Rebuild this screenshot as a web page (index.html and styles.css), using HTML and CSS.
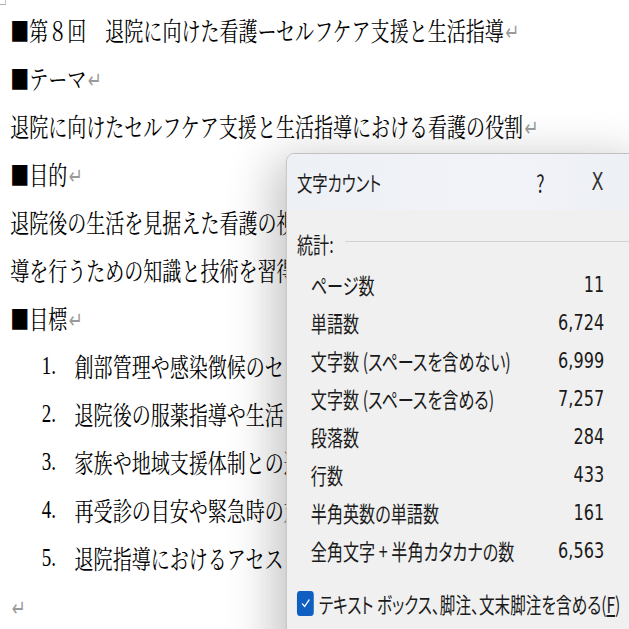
FILE: index.html
```html
<!DOCTYPE html>
<html lang="ja">
<head>
    <meta charset="utf-8">
    <title>文字カウント</title>
    <link rel="stylesheet" href="styles.css">
</head>
<body>
    <div class="screen">
        <div class="corner"></div>
        <div class="doc">
            <p><span class="sq">■</span>第８回　退院に向けた看護ーセルフケア支援と生活指導<span class="ret">↵</span></p>
            <p><span class="sq">■</span>テーマ<span class="ret">↵</span></p>
            <p>退院に向けたセルフケア支援と生活指導における看護の役割<span class="ret">↵</span></p>
            <p><span class="sq">■</span>目的<span class="ret">↵</span></p>
            <p>退院後の生活を見据えた看護の視</p>
            <p>導を行うための知識と技術を習得</p>
            <p><span class="sq">■</span>目標<span class="ret">↵</span></p>
            <ol class="goals">
                <li><span class="num">1.</span>創部管理や感染徴候のセ</li>
                <li><span class="num">2.</span>退院後の服薬指導や生活</li>
                <li><span class="num">3.</span>家族や地域支援体制との連</li>
                <li><span class="num">4.</span>再受診の目安や緊急時の対</li>
                <li><span class="num">5.</span>退院指導におけるアセス</li>
            </ol>
            <p><span class="ret">↵</span></p>
        </div>

        <div class="dialog">
            <div class="titlebar">
                <span class="title">文字カウント</span>
                <span class="help">?</span>
                <span class="close">X</span>
            </div>
            <div class="dialog-body">
                <div class="stats-head">
                    <span>統計:</span>
                    <span class="rule"></span>
                </div>
                <div class="row"><span>ページ数</span><span class="val">11</span></div>
                <div class="row"><span>単語数</span><span class="val">6,724</span></div>
                <div class="row"><span>文字数 (スペースを含めない)</span><span class="val">6,999</span></div>
                <div class="row"><span>文字数 (スペースを含める)</span><span class="val">7,257</span></div>
                <div class="row"><span>段落数</span><span class="val">284</span></div>
                <div class="row"><span>行数</span><span class="val">433</span></div>
                <div class="row"><span>半角英数の単語数</span><span class="val">161</span></div>
                <div class="row"><span>全角文字 + 半角カタカナの数</span><span class="val">6,563</span></div>
                <label class="check">
                    <span class="box">
                        <svg width="14" height="12" viewBox="0 0 14 12"><path d="M2 6.5 L5.5 9.5 L12 2.5" fill="none" stroke="#fff" stroke-width="1.6"/></svg>
                    </span>
                    <span class="check-text">テキスト ボックス、脚注、文末脚注を含める(<u>F</u>)</span>
                </label>
            </div>
        </div>
    </div>
</body>
</html>
```

FILE: styles.css
```css
* {
    margin: 0;
    padding: 0;
    box-sizing: border-box;
}
html, body {
    width: 629px;
    height: 629px;
    overflow: hidden;
    background: #fff;
}
/* the capture is squeezed horizontally, so the page is laid out wide and scaled */
.screen {
    position: relative;
    width: 860px;
    height: 629px;
    transform: scaleX(0.7314);
    transform-origin: 0 0;
    overflow: hidden;
}
.corner {
    position: absolute;
    left: 0;
    top: 0;
    width: 8px;
    height: 5px;
    border-right: 1px solid #b0b0b0;
    border-bottom: 1px solid #b0b0b0;
}
.doc {
    padding: 6px 0 0 14px;
    font-family: "Noto Serif CJK JP", "Noto Sans CJK JP", serif;
    font-size: 26px;
    line-height: 48px;
    color: #000;
    white-space: nowrap;
}
.doc p,
.goals li {
    height: 48px;
}
.sq {
    font-family: "Noto Sans CJK JP", sans-serif;
    line-height: 1;
}
.ret {
    font-family: "DejaVu Sans", sans-serif;
    font-size: 23px;
    line-height: 1;
    color: #9a9a9a;
    margin-left: 2px;
    vertical-align: 1px;
}
.goals {
    list-style: none;
    padding-left: 43px;
}
.goals li {
    display: flex;
}
.num {
    font-family: "Liberation Serif", serif;
    width: 45px;
}

.dialog {
    position: absolute;
    left: 391px;
    top: 153px;
    width: 500px;
    height: 520px;
    background: #f0f0f0;
    border: 1px solid #b9b9b9;
    border-radius: 10px;
    box-shadow: -16px 6px 55px rgba(0, 0, 0, 0.24);
    font-family: "Noto Sans CJK JP", sans-serif;
    font-feature-settings: "palt";
    font-size: 22px;
    color: #1b1b1b;
    overflow: hidden;
}
.titlebar {
    display: flex;
    align-items: center;
    height: 56px;
    padding-left: 14px;
    background: linear-gradient(90deg, #edf0f5, #f1f3f8 60%, #eceff4);
}
.title {
    flex: 0 0 auto;
    font-size: 21px;
}
.help {
    margin-left: 212px;
    font-size: 24px;
}
.close {
    margin-left: 64px;
    font-family: "DejaVu Sans", sans-serif;
    font-size: 24px;
    color: #333;
}
.dialog-body {
    padding: 16px 0 0 14px;
}
.stats-head {
    display: flex;
    align-items: center;
    height: 34px;
    margin-bottom: 5px;
}
.rule {
    flex: 1;
    height: 1px;
    margin: -4px 0 0 16px;
    background: #d2d2d2;
}
.row {
    display: flex;
    justify-content: space-between;
    align-items: center;
    width: 401px;
    height: 38px;
    margin-left: 19px;
}
.val {
    font-family: "DejaVu Sans", sans-serif;
    font-size: 22px;
}
.check {
    display: flex;
    align-items: center;
    gap: 7px;
    height: 26px;
    margin-top: 21px;
}
.check-text {
    font-size: 21.4px;
}
.box {
    display: flex;
    align-items: center;
    justify-content: center;
    width: 23px;
    height: 25px;
    border-radius: 4px;
    background: #0f5fc2;
}
```
